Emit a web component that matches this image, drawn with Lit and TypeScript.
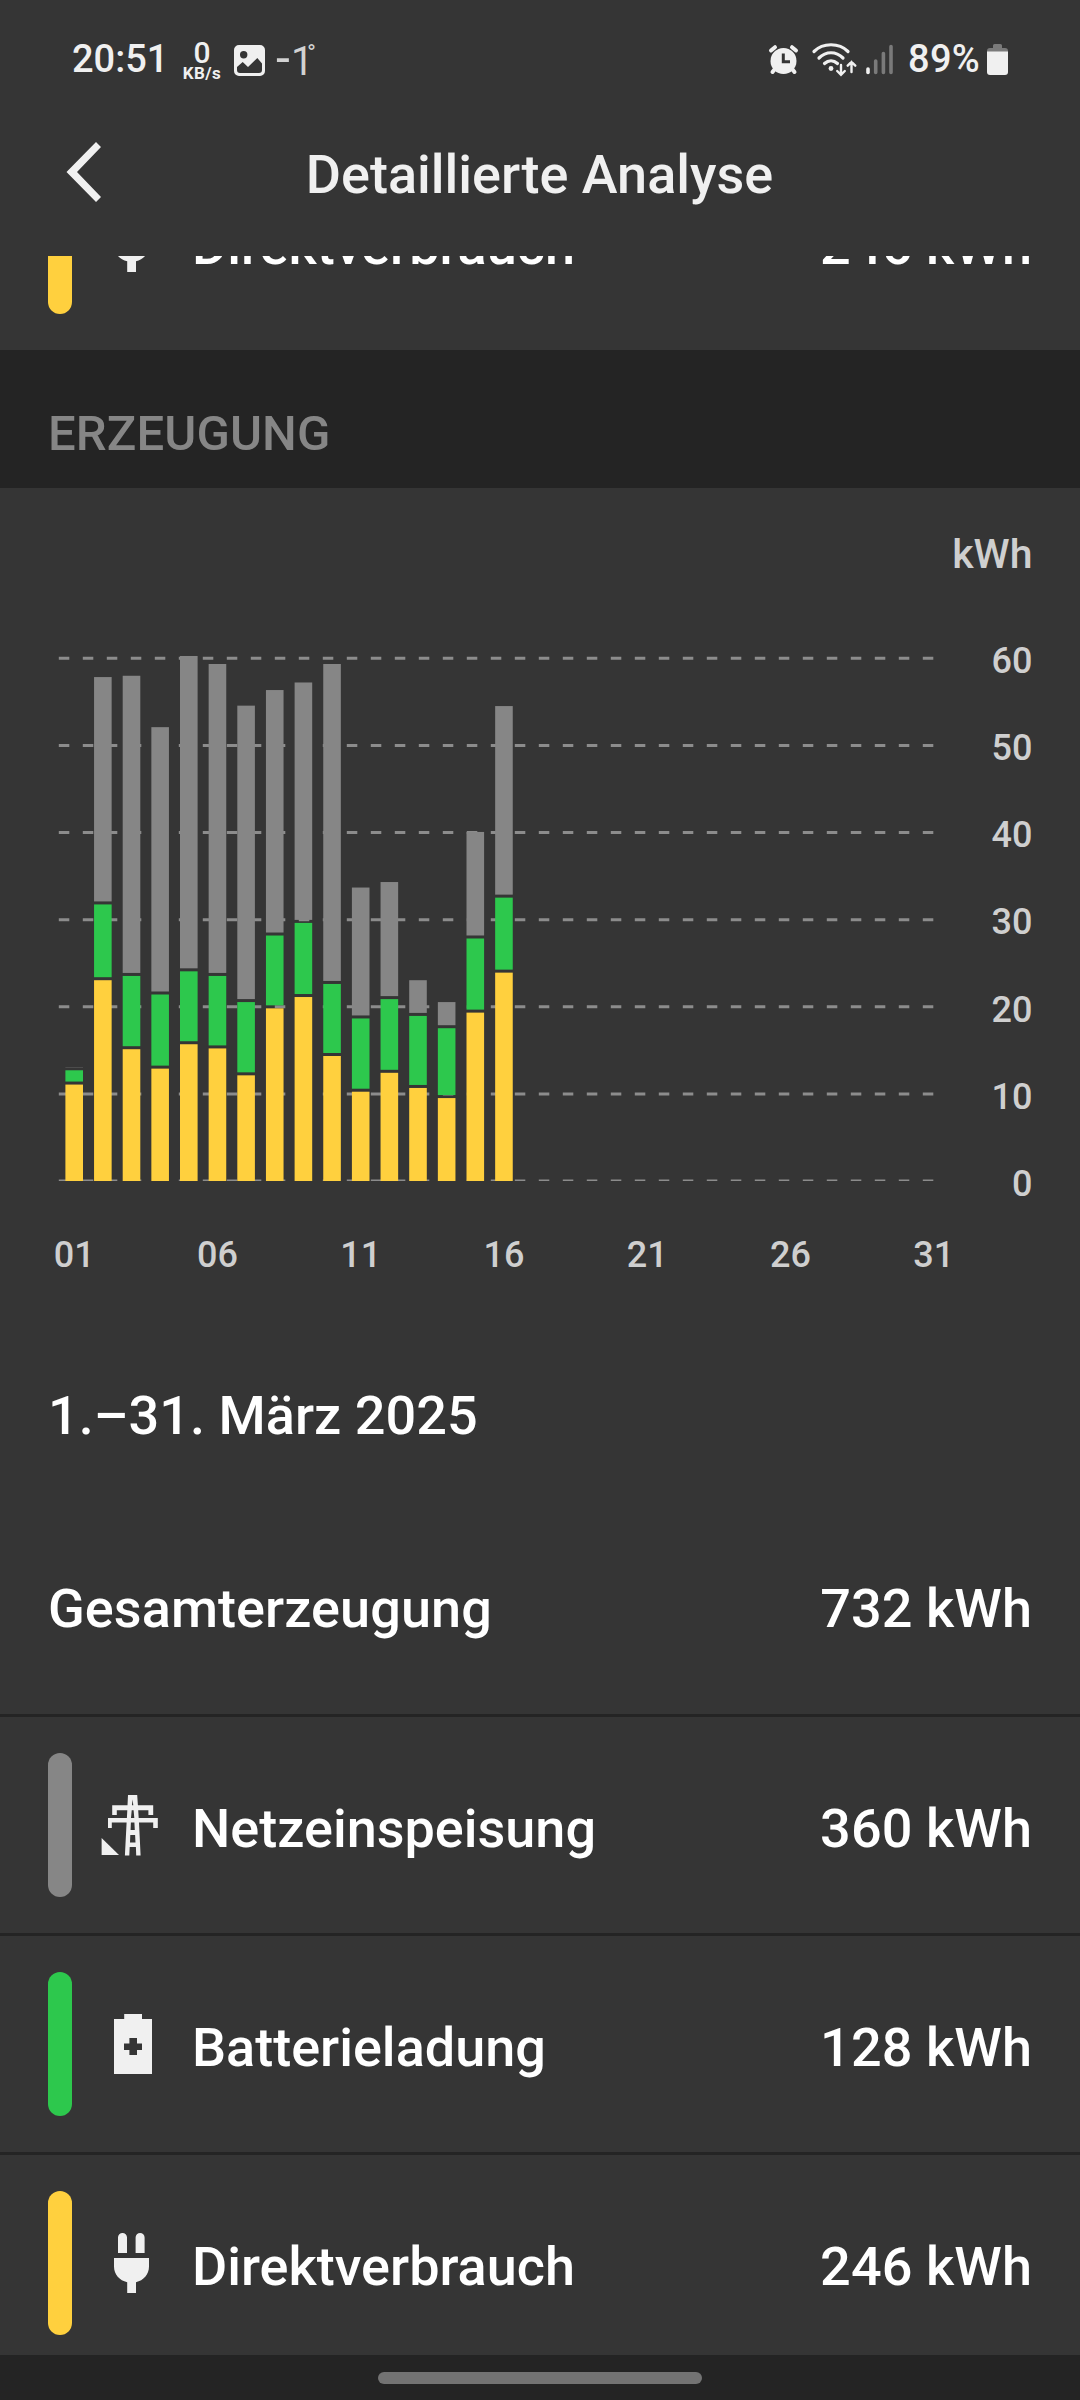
import { LitElement, html, svg, css } from "lit";
import { customElement, property } from "lit/decorators.js";

type IconName = "grid" | "battery" | "plug";

interface DayYield {
  direct: number;
  stored: number;
  total: number;
}

/* Cumulated kWh per day: direct use, plus battery, plus grid feed-in. */
const DAYS: DayYield[] = [
  [11.07, 12.71, 13.07], [23.05, 31.75, 57.85], [15.13, 23.54, 58.0], [12.9, 21.41, 52.1],
  [15.7, 24.07, 60.27], [15.22, 23.54, 59.35], [12.13, 20.54, 54.57], [19.82, 28.18, 56.36],
  [21.12, 29.63, 57.23], [14.35, 22.62, 59.35], [10.25, 18.66, 33.69], [12.42, 20.88, 34.32],
  [10.68, 18.95, 23.05], [9.52, 17.54, 20.54], [19.33, 27.84, 40.07], [23.92, 32.53, 54.52],
].map(([direct, stored, total]) => ({ direct, stored, total }));

const ICONS = {
  grid: svg`
    <path d="M-.4 43V60H17Z"/>
    <path fill-rule="evenodd" d="M26 0H35.2L35.9 10.3H51.2V20H46.4V15.3H36.2L36.7 23H55.8V33H51.2V27.5H37L38.6 60.5H34.2L33.9 52H27.7L27.3 60.5H22.9L24.6 27.5H9.8V33H6V23H24.9L25.3 15.3H14.8V20H10.2V10.3H25.5ZM30.6 4.5L29.9 10.3H31.3ZM29.7 15.3L29 23H32.3L31.6 15.3ZM28.9 27.5L28.6 35H32.8L32.4 27.5ZM28.3 40L28 47.5H33.5L33.1 40Z"/>`,
  battery: svg`<path fill-rule="evenodd" d="M22.2 0H40V5H50V60H12V5H22.2ZM27.4 24V29.4H22V36H27.4V41H35V36H40V29.4H35V24Z"/>`,
  plug: svg`<path d="M16 20V4.5a4.5 4.5 0 0 1 9 0V20ZM33.6 20V4.5a4.5 4.5 0 0 1 9 0V20ZM12 25H47V33.5C47 41.500 41.500 47.500 34 49.200V60H25.200V49.200C17.500 47.500 12 41.500 12 33.500Z"/>`,
};

@customElement("status-bar")
class StatusBar extends LitElement {
  static styles = css`
    :host { display: flex; align-items: center; height: 118px; padding: 0 71px 0 72px; color: #f0f0f0; font-size: 38px; font-weight: 500; }
    svg { display: block; flex: none; }
    .time { width: 110px; letter-spacing: 0; }
    .rate { display: flex; flex-direction: column; align-items: center; width: 40px; padding-top: 2px; }
    .num { font-size: 30px; line-height: 26px; }
    .unit { font-size: 17px; line-height: 14px; font-weight: 700; letter-spacing: 0.5px; }
    .photo { margin: 2px 11px 0 12px; }
    .temp { display: flex; align-items: baseline; padding-top: 4px; font-weight: 400; font-size: 40px; color: #d2d2d2; }
    .minus { width: 15px; font-size: 50px; line-height: 40px; }
    .one { width: 19px; }
    .deg { margin-left: -3px; font-size: 24px; line-height: 28px; align-self: flex-start; padding-top: 1px; }
    .icons { margin-left: auto; margin-top: 2px; }
    .level { width: 93px; padding-left: 14px; box-sizing: border-box; letter-spacing: 0.3px; }
    .cell { margin-right: 1px; margin-top: 1px; }
  `;

  render() {
    return html`
      <span class="time">20:51</span>
      <span class="rate"><span class="num">0</span><span class="unit">KB/s</span></span>
      <svg class="photo" width="31" height="31" viewBox="0 0 31 31">
        <path fill="#f0f0f0" fill-rule="evenodd" d="M5 0H26a5 5 0 0 1 5 5V26a5 5 0 0 1-5 5H5a5 5 0 0 1-5-5V5a5 5 0 0 1 5-5ZM9.700 6a3.700 3.700 0 1 0 0 7.400a3.700 3.700 0 0 0 0-7.400ZM3 22V25a3 3 0 0 0 3 3H25a3 3 0 0 0 3-3V18.500L23.300 13L14 22L8.700 17Z"/>
      </svg>
      <span class="temp"><span class="minus">-</span><span class="one">1</span><span class="deg">°</span></span>
      <svg class="icons" width="126" height="34" viewBox="768 43 126 34">
        <g fill="none" stroke="#f0f0f0" stroke-linecap="round">
          <path stroke-width="4" d="M771 50.500L775 47.200M796 50.500L792 47.200M774.500 69.500L772.500 72M792.500 69.500L794.500 72"/>
          <path stroke-width="3.200" d="M814 51.500C823 42.500 839 42.500 848 51.500M819 58C826 51 836 51 843 58M824.500 63.500C828.500 59.800 833.500 59.800 837.500 63.500"/>
          <path stroke-width="2.400" d="M841 65V74.500M837.200 71L841 74.800L844.800 71M851.500 72V62M847.700 65.700L851.500 61.900L855.300 65.700"/>
        </g>
        <circle cx="783.500" cy="61" r="13" fill="#f0f0f0"/>
        <path fill="none" stroke="#353535" stroke-width="3" d="M783.300 53.500V61.800H790"/>
        <circle cx="831" cy="68.500" r="2.400" fill="#f0f0f0"/>
        <g stroke-width="3.600" stroke-linecap="round">
          <path stroke="#f0f0f0" d="M868 69V72.500"/>
          <path stroke="#7a7a7a" d="M875.700 61V72.500M883.400 53.500V72.500M891 46.500V72.500"/>
        </g>
      </svg>
      <span class="level">89%</span>
      <svg class="cell" width="21" height="31" viewBox="0 0 21 31">
        <path fill="#7a7a7a" d="M6 4V1.500A1.500 1.500 0 0 1 7.500 0H13.500A1.500 1.500 0 0 1 15 1.500V4H18A3 3 0 0 1 21 7V8H0V7A3 3 0 0 1 3 4Z"/>
        <path fill="#f0f0f0" d="M0 7.500H21V28A3 3 0 0 1 18 31H3A3 3 0 0 1 0 28Z"/>
      </svg>`;
  }
}

@customElement("energy-row")
class EnergyRow extends LitElement {
  @property() label = "";
  @property() value = "";
  @property() icon: IconName = "plug";
  @property() tone = "direct";

  static styles = css`
    :host { display: block; }
    .row { display: flex; align-items: center; gap: 30px; height: 216px; padding: 0 48px; box-sizing: border-box; }
    .pill { width: 24px; height: 144px; border-radius: 12px; }
    .feed { background: #868686; }
    .stored { background: #2dc84d; }
    .direct { background: #ffd03e; }
    .icon { display: block; width: 60px; height: 60px; fill: #f0f0f0; overflow: visible; }
    .label { flex: 1; padding-top: 6px; }
    .value { padding-top: 6px; letter-spacing: 0.1px; }
  `;

  render() {
    return html`<div class="row">
      <span class="pill ${this.tone}"></span>
      <svg class="icon" viewBox="0 0 60 60">${ICONS[this.icon]}</svg>
      <span class="label">${this.label}</span>
      <span class="value">${this.value}</span>
    </div>`;
  }
}

const BASE = 693;
const UNIT = 8.711;
const GAP = 3;
const dayX = (day: number) => 74.2 + (day - 1) * 28.65;
const yOf = (kwh: number) => BASE - kwh * UNIT;

@customElement("yield-chart")
class YieldChart extends LitElement {
  static styles = css`
    :host { display: block; height: 853px; }
    .chart { display: block; }
    .text { fill: #cfcfcf; font-size: 36px; font-weight: 500; }
    .unit { font-size: 41px; }
    .end { text-anchor: end; }
    .mid { text-anchor: middle; }
    .grid { stroke: #8c8c8c; stroke-width: 3; stroke-dasharray: 10.5 13.5; }
    .feed { fill: #868686; }
    .stored { fill: #2dc84d; }
    .direct { fill: #ffd03e; }
  `;

  private segment(day: number, from: number, to: number, tone: string) {
    const top = yOf(to);
    return svg`<rect class=${tone} x=${dayX(day) - 8.8} y=${top} width="17.6" height=${Math.max(from - top, 0.3)}></rect>`;
  }

  render() {
    return html`<svg class="chart" width="1080" height="853" viewBox="0 0 1080 853">
      <defs><clipPath id="plot"><rect x="0" y="0" width="1080" height=${BASE}></rect></clipPath></defs>
      <text class="text unit end" x="1032.500" y="79.500">kWh</text>
      <g clip-path="url(#plot)">
        ${[60, 50, 40, 30, 20, 10, 0].map(
          (v) => svg`<line class="grid" x1="58.800" x2="934" y1=${yOf(v)} y2=${yOf(v)}></line>`,
        )}
        ${DAYS.map((d, i) => [
          this.segment(i + 1, BASE, d.direct, "direct"),
          this.segment(i + 1, yOf(d.direct) - GAP, d.stored, "stored"),
          this.segment(i + 1, yOf(d.stored) - GAP, d.total, "feed"),
        ])}
      </g>
      ${[60, 50, 40, 30, 20, 10, 0].map(
        (v) => svg`<text class="text end" x="1032.500" y=${yOf(v) + 14.8}>${v}</text>`,
      )}
      ${[1, 6, 11, 16, 21, 26, 31].map(
        (d) => svg`<text class="text mid" x=${dayX(d)} y="778.500">${String(d).padStart(2, "0")}</text>`,
      )}
    </svg>`;
  }
}

@customElement("app-root")
class AppRoot extends LitElement {
  static styles = css`
    :host {
      display: flex; flex-direction: column; width: 1080px; height: 2400px; overflow: hidden;
      background: #353535; color: #fff; font-family: Roboto, sans-serif; font-size: 54px; font-weight: 500;
    }
    status-bar, .header, .nav { flex: none; }
    .header { display: grid; grid-template-columns: 120px 1fr 121px; align-items: center; height: 138px; padding-bottom: 30px; box-sizing: border-box; color: #f0f0f0; }
    .back { display: block; margin-left: 66px; }
    .title { margin: 5px 0 0; font-size: 54px; font-weight: 500; text-align: center; white-space: nowrap; }
    .content { flex: 1; min-height: 0; overflow: hidden; }
    .scrolled { margin-top: -122px; }
    .section { margin: 0; height: 138px; padding: 54px 48px 0; box-sizing: border-box; background: #242424; color: #868686; font-size: 49px; line-height: 59px; font-weight: 500; letter-spacing: 0.12px; }
    .period { height: 156px; padding: 43px 48px 0; box-sizing: border-box; line-height: 64px; letter-spacing: 0.05px; }
    .total { display: flex; justify-content: space-between; align-items: center; height: 217px; padding: 5px 48px 0; box-sizing: border-box; letter-spacing: 0.08px; }
    .line { border-top: 3px solid #242424; }
    .nav { display: flex; justify-content: center; height: 45px; padding-top: 17px; box-sizing: border-box; background: #242424; }
    .handle { width: 324px; height: 12px; border-radius: 6px; background: #737373; }
  `;

  render() {
    return html`
      <status-bar></status-bar>
      <header class="header">
        <svg class="back" width="36" height="60" viewBox="0 0 36 60"><path fill="#f0f0f0" d="M30 0L35 5L11 30L35 55L30 60L.500 30Z"/></svg>
        <h1 class="title">Detaillierte Analyse</h1>
      </header>
      <main class="content">
        <energy-row class="scrolled" label="Direktverbrauch" value="246 kWh" icon="plug" tone="direct"></energy-row>
        <h2 class="section">ERZEUGUNG</h2>
        <yield-chart></yield-chart>
        <div class="period">1.–31. März 2025</div>
        <div class="total"><span>Gesamterzeugung</span><span>732 kWh</span></div>
        <energy-row class="line" label="Netzeinspeisung" value="360 kWh" icon="grid" tone="feed"></energy-row>
        <energy-row class="line" label="Batterieladung" value="128 kWh" icon="battery" tone="stored"></energy-row>
        <energy-row class="line" label="Direktverbrauch" value="246 kWh" icon="plug" tone="direct"></energy-row>
      </main>
      <footer class="nav"><span class="handle"></span></footer>`;
  }
}
